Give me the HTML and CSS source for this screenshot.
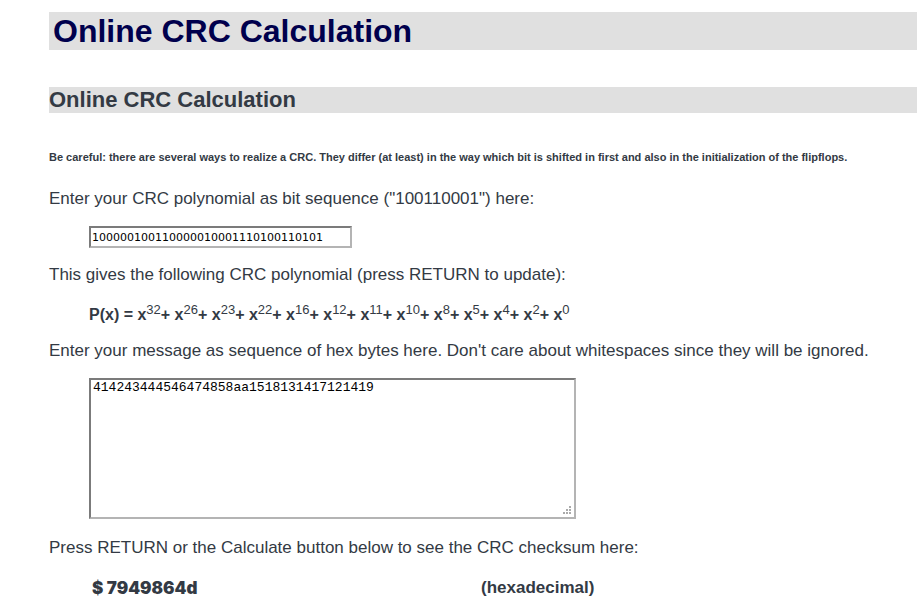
FILE: index.html
```html
<!DOCTYPE html>
<html lang="en">
<head>
<meta charset="utf-8">
<title>Online CRC Calculation</title>
<link rel="stylesheet" href="styles.css">
</head>
<body>
<main>
<h1>Online CRC Calculation</h1>
<h2>Online CRC Calculation</h2>
<p class="note">Be careful: there are several ways to realize a CRC. They differ (at least) in the way which bit is shifted in first and also in the initialization of the flipflops.</p>
<form>
<label for="poly">Enter your CRC polynomial as bit sequence ("100110001") here:</label>
<div class="indent"><input id="poly" type="text" value="100000100110000010001110100110101"></div>
<p>This gives the following CRC polynomial (press RETURN to update):</p>
<p class="indent polynomial">P(x) = x<sup>32</sup>+ x<sup>26</sup>+ x<sup>23</sup>+ x<sup>22</sup>+ x<sup>16</sup>+ x<sup>12</sup>+ x<sup>11</sup>+ x<sup>10</sup>+ x<sup>8</sup>+ x<sup>5</sup>+ x<sup>4</sup>+ x<sup>2</sup>+ x<sup>0</sup></p>
<label for="message">Enter your message as sequence of hex bytes here. Don't care about whitespaces since they will be ignored.</label>
<div class="indent message"><textarea id="message">414243444546474858aa1518131417121419</textarea></div>
<p>Press RETURN or the Calculate button below to see the CRC checksum here:</p>
<div class="indent result"><output for="poly message">$ 7949864d</output><span>(hexadecimal)</span></div>
</form>
</main>
</body>
</html>
```
FILE: styles.css
```css
* {
  box-sizing: border-box;
}

body {
  margin: 0;
  background: #fff;
  color: #333a44;
  font: 17px/20px "Liberation Sans", Arial, sans-serif;
}

main {
  padding: 12px 0 8px 49px;
}

h1,
h2 {
  background: #e0e0e0;
}

h1 {
  margin: 0 0 37px;
  padding-left: 4px;
  color: #00004d;
  font-size: 32px;
  line-height: 38px;
}

h2 {
  margin: 0 0 36px;
  font-size: 22px;
  line-height: 26px;
}

p {
  margin: 0;
}

.note {
  margin-bottom: 24px;
  font-size: 11px;
  font-weight: bold;
  line-height: 16px;
}

form {
  display: flex;
  flex-direction: column;
}

.indent {
  margin: 17px 0 17px 40px;
}

input,
textarea {
  display: block;
  max-width: 100%;
  border: 2px solid;
  border-color: #7b7b7b #b4b4b4 #b4b4b4 #7b7b7b;
  border-radius: 0;
  background: #fff;
  color: #000;
}

input {
  width: 263px;
  height: 22px;
  padding: 0 1px;
  font: 11px "DejaVu Sans", Verdana, sans-serif;
}

textarea {
  width: 487px;
  height: 141px;
  padding: 0 2px;
  font: 13px/15px "Liberation Mono", "Courier New", monospace;
  overflow: auto;
}

/* Dotted triangular resize grip */
textarea::-webkit-resizer {
  background:
    linear-gradient(#aaa, #aaa) right 3px bottom 9px / 2px 2px no-repeat,
    linear-gradient(#aaa, #aaa) right 3px bottom 6px / 2px 2px no-repeat,
    linear-gradient(#aaa, #aaa) right 6px bottom 6px / 2px 2px no-repeat,
    linear-gradient(#aaa, #aaa) right 3px bottom 3px / 2px 2px no-repeat,
    linear-gradient(#aaa, #aaa) right 6px bottom 3px / 2px 2px no-repeat,
    linear-gradient(#aaa, #aaa) right 9px bottom 3px / 2px 2px no-repeat;
}

.message {
  margin-bottom: 19px;
}

.polynomial {
  margin: 20px 0 16px 40px;
  font-size: 16px;
  font-weight: bold;
}

.polynomial sup {
  font-weight: normal;
  font-size: 13px;
  line-height: 0;
  vertical-align: 6px;
}

.result {
  display: grid;
  grid-template-columns: 389px 1fr;
  margin: 20px 0 0 43px;
  font-weight: bold;
}

output {
  font-family: Inter, "Arial Black", sans-serif;
  font-weight: 900;
}
```
